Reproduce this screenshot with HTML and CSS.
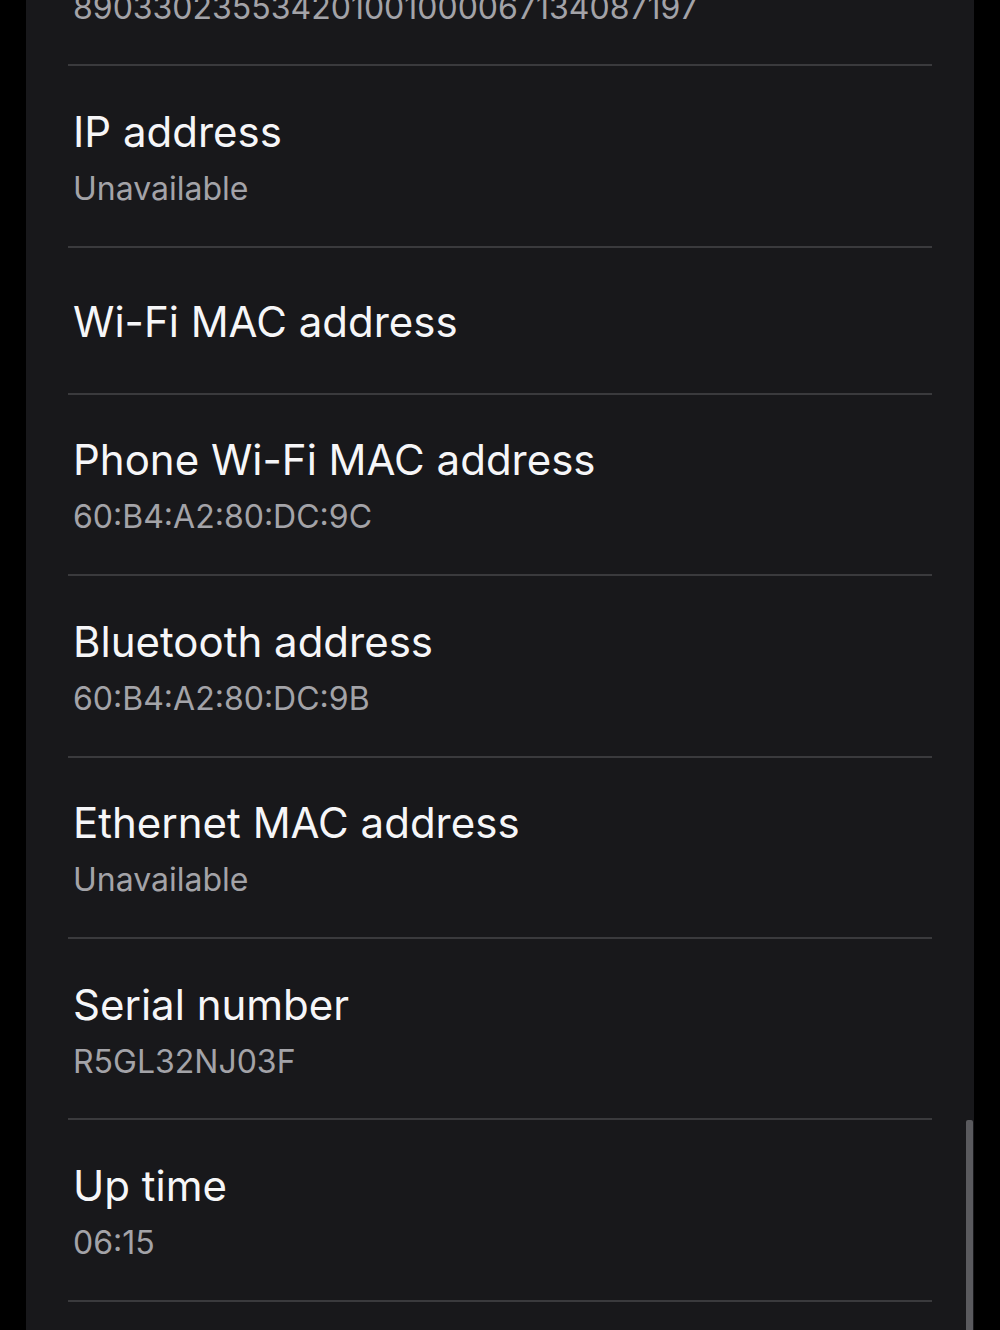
FILE: index.html
```html
<!DOCTYPE html>
<html lang="en">
  <head>
    <meta charset="UTF-8" />
    <title>Status information</title>
    <link rel="stylesheet" href="styles.css">
  </head>
  <body>
    <div class="info-panel">
      <div class="info-list">
        <div class="info-item">
          <div class="info-title">EID</div>
          <div class="info-value">890330235534201001000067134087197</div>
        </div>
        <div class="info-item">
          <div class="info-title">IP address</div>
          <div class="info-value">Unavailable</div>
        </div>
        <div class="info-item">
          <div class="info-title">Wi-Fi MAC address</div>
        </div>
        <div class="info-item">
          <div class="info-title">Phone Wi-Fi MAC address</div>
          <div class="info-value">60:B4:A2:80:DC:9C</div>
        </div>
        <div class="info-item">
          <div class="info-title">Bluetooth address</div>
          <div class="info-value">60:B4:A2:80:DC:9B</div>
        </div>
        <div class="info-item">
          <div class="info-title">Ethernet MAC address</div>
          <div class="info-value">Unavailable</div>
        </div>
        <div class="info-item">
          <div class="info-title">Serial number</div>
          <div class="info-value">R5GL32NJ03F</div>
        </div>
        <div class="info-item">
          <div class="info-title">Up time</div>
          <div class="info-value">06:15</div>
        </div>
        <div class="info-item">
          <div class="info-title">Software information</div>
        </div>
      </div>
      <div class="scroll-thumb"></div>
    </div>
  </body>
</html>
```

FILE: styles.css
```css
html,
body {
  margin: 0;
  height: 100%;
  overflow: hidden;
  background-color: #000;
}
body {
  font-family: Inter, Roboto, sans-serif;
  color: #f4f4f6;
}
.info-panel {
  position: relative;
  width: 948px;
  height: 1330px;
  margin-left: 26px;
  background-color: #18181b;
  overflow: hidden;
}
.info-list {
  margin-top: -115px;
  padding: 0 42px;
}
.info-item {
  min-height: 147px;
  padding: 39px 0 36px 5px;
  box-sizing: border-box;
  display: flex;
  flex-direction: column;
  justify-content: center;
  border-bottom: 2px solid #3a3a3d;
}
.info-item:has(.info-value) {
  min-height: 181.4px;
}
.info-title {
  font-size: 42px;
  line-height: 52px;
  color: #f6f6f8;
}
.info-value {
  margin-top: 11px;
  font-size: 32px;
  line-height: 40px;
  color: #a3a3a8;
}
.scroll-thumb {
  position: absolute;
  right: 1px;
  top: 1120px;
  width: 7px;
  height: 230px;
  border-radius: 2px;
  background-color: #5a5a5e;
}
```
